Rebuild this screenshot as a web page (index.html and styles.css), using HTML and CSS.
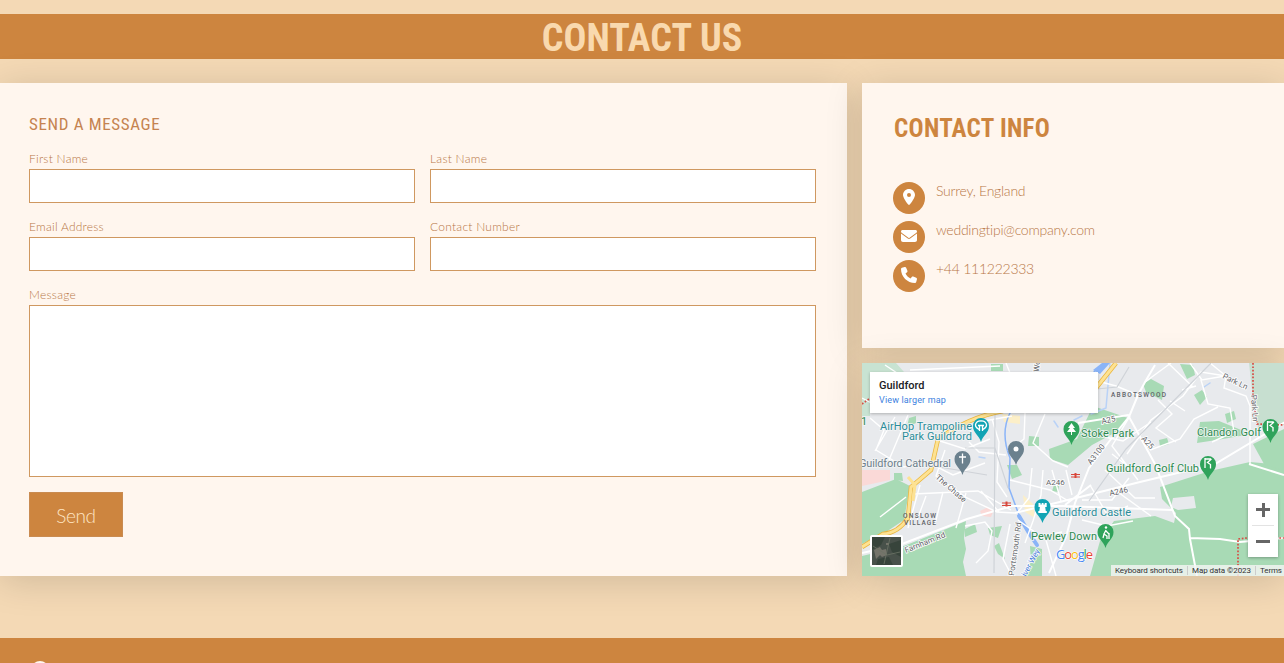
FILE: index.html
```html
<!DOCTYPE html>
<html lang="en">
<head>
<meta charset="utf-8">
<title>Contact Us</title>
<link rel="stylesheet" href="styles.css">
</head>
<body>
<header class="banner"><h1 class="banner-title">Contact Us</h1></header>
<main class="contact">
  <form class="panel form">
    <h2 class="form-title">Send a message</h2>
    <div class="fields">
      <label class="field"><span class="label">First Name</span><input class="input" type="text"></label>
      <label class="field"><span class="label">Last Name</span><input class="input" type="text"></label>
      <label class="field"><span class="label">Email Address</span><input class="input" type="text"></label>
      <label class="field"><span class="label">Contact Number</span><input class="input" type="text"></label>
      <label class="field wide"><span class="label">Message</span><textarea class="input area"></textarea></label>
    </div>
    <button class="send" type="button">Send</button>
  </form>
  <div class="side">
    <section class="panel info">
      <h2 class="info-title">Contact Info</h2>
      <ul class="list">
        <li class="item"><span class="disc"><svg width="12" height="16" viewBox="0 0 384 512"><path fill="#fff" fill-rule="evenodd" d="M215.700 499.200C267 435 384 279.400 384 192 384 86 298 0 192 0S0 86 0 192c0 87.400 117 243 168.300 307.200 12.300 15.300 35.100 15.300 47.400 0zM192 128a64 64 0 1 1 0 128 64 64 0 1 1 0-128z"/></svg></span><span>Surrey, England</span></li>
        <li class="item"><span class="disc"><svg width="16" height="16" viewBox="0 0 512 512"><path fill="#fff" d="M48 64C21.500 64 0 85.500 0 112c0 15.100 7.100 29.300 19.200 38.400l217.600 163.200c11.400 8.500 27 8.500 38.400 0l217.600-163.200c12.100-9.100 19.200-23.300 19.200-38.400 0-26.500-21.500-48-48-48H48zM0 176v208c0 35.300 28.700 64 64 64h384c35.300 0 64-28.700 64-64V176L294.400 339.200c-22.800 17.100-54 17.100-76.800 0L0 176z"/></svg></span><span>weddingtipi@company.com</span></li>
        <li class="item"><span class="disc"><svg width="16" height="16" viewBox="0 0 512 512"><path fill="#fff" d="M164.900 24.600c-7.700-18.600-28-28.500-47.400-23.200l-88 24C12.100 30.200 0 46 0 64c0 247.400 200.600 448 448 448 18 0 33.800-12.100 38.600-29.500l24-88c5.300-19.400-4.600-39.700-23.200-47.400l-96-40c-16.300-6.800-35.200-2.100-46.300 11.600L304.700 368C234.300 334.700 177.300 277.700 144 207.300l49.300-40.300c13.700-11.200 18.400-30 11.600-46.300l-40-96z"/></svg></span><span>+44 111222333</span></li>
      </ul>
    </section>
    <section class="panel map">
      <svg class="map-art" width="422" height="213" viewBox="862 363 422 213">
        <defs>
          <path id="pin" d="M0 14C-2 7-8 5-8-2a8 8 0 1 1 16 0C8 5 2 7 0 14z"/>
        </defs>
        <path fill="#e8eaed" d="M862 363h422v213H862z"/>
        <g fill="#a8dab5">
          <path fill="#c8e3d2" d="M862 363h34l8 9-34 4v40h-8z"/>
          <path fill="#c7dfd0" d="M1249 363h35v62l-26 2-5-28z"/>
          <path d="M862 492l34-13 14 7-6 34-18 12-24 12z"/>
          <path d="M862 556l42-10 62-25 -2 17 2 11-3 13 3 14H862z"/>
          <path d="M1049 449l28-10 16-33 35 12-8 12-28 15-24 20-18-6z"/>
          <path d="M1090 576l10-35 14-20 41-5 19 7 2-10-14-14-2-12 50-16 40-9 34 3v111z"/>
          <path d="M1253 444l31-15v42l-20-7z"/>
          <path d="M1200 422l19-1 32 13-28 5-26 4z"/>
          <path d="M991 364h12v7h-12zM1143 384l8-5 13 7-2 14-16-8zM1180 364l13 1 2 10-8 4zM1194 395l8-5 5 7-7 8zM1225 414l9-3 2 8-9 4zM1159 440l8-2 2 6-9 3zM1029 436l10 1v9h-11zM894 473h8l1 8-9-1zM965 529l10-5 2 8-12 5zM988 528l14-2-4 12-8-3zM994 546l5-3 6 16-7-5zM1054 485l5 1-1 6-6-1zM1030 546l12 3v27h-19l8-14z"/>
          <path d="M1007 465l10 0 5 10-10 4zM909 418l7-2v7l-9 4z"/>
        </g>
        <path fill="#e8eaed" d="M1171 507l2-9 21-2 2 12-18 2z"/>
        <g fill="#fad9d7"><path d="M862 470h28v10l-28 6zM980 511l8-4 5 5-2 5-9-1z"/></g>
        <path fill="#fcefc8" d="M1002 414l18 2v8l-16-2zM1023 495l10 9 2 14-10-6z"/>
        <g fill="none" stroke="#8ab4f8" stroke-linecap="round" stroke-linejoin="round">
          <path stroke-width="1.500" d="M1096 370l-10 10M1010 413q-10 20 0 45l-1 30 10 27"/>
          <path stroke-width="4" d="M1019 516l10 17 8 12"/>
          <path stroke-width="1.500" stroke="#b9d2f7" d="M1074 420l8-4M1054 421l4 6M979 457l6 1M1210 383l-6 4M1110 363l-4 45-15 6"/>
          <path fill="#8ab4f8" stroke="none" d="M1093 370l9-7h8l-10 11z"/>
        </g>
        <g fill="none" stroke="#fff" stroke-width="1.400">
          <path stroke-width="2" d="M1155 365l-10 17-7 13-9 22-18 22-22 29-14 35-9 34-17 36M1078 423l50-8 27 49 20 52 14 13 1 10 7 37M862 553l40-9 65-25 45-13 50 0 110 4M1190 538l30 1 20 3 44-4M1065 505l26-20M1015 513l65-16 60-15 75-18 70-42M1284 475l-35-11"/>
          <path d="M1210 363l16 13-2 12 22 8 4 10 0 58M1226 376l-25-4-18 24-32 24-24 34M1225 376l-24 4 7 24 22 4 4 24-22 10M1138 395l-22-9-22-6M1150 450l30-11 14-20 24-12M1130 416l-18 30 26 34M1145 382l26-19M1168 363l25 24M1158 400l14 14-16 14 20 14M1105 437l18 4 28-19M1112 454l18 14 12-2M1185 411l-15-10M1182 390l14-4M1090 485l18 31 20-10M1105 470l30 28 20 0M1082 500l30 0 17-22M1115 490l36 26"/>
          <path d="M870 418l14 12-8 20 28 17 21-6 28 14 32-12M895 417l-20 34M908 415l-19 45M937 440l28 9 25-10M984 421l28-5M1025 413l-1 26-16 12M1045 414l-12 29 20 18 15 6M992 419l7 23-2 40 10 15M969 442l10 10 27 3M945 450l-9 26 31 22 30 14 18 1M920 485l-12 43M926 496l-9 24M943 492l-8 32M913 494l65-3 33 19M880 517l26-20M966 493l-10 35M981 491l18 21M1032 468l-3 30-12 15M1043 470l-2 25-8 26-8 22M1010 480l40 10 20 12M1052 470l9 31M1066 470l6 25M965 526l20-4 7 9-4 20-12 12M1010 524l-7 35 9 17M1018 520l28 20 10 36M1034 538l28-6M862 398l15 8M885 365l15 10M910 370l90-4M1006 363l4 10M1190 363l12 17"/>
          <path d="M1082 520l25 6 26-5"/>
        </g>
        <g fill="none" stroke="#cfd3d8" stroke-width="1.200"><path d="M1211 363l-85 86-37 52M995 413l-1 160M965 448l30 0 13 40M1097 389l20-2 12-20M927 465l60 10"/></g>
        <path fill="none" stroke="#eab63e" stroke-width="4.500" d="M1116 363l-24 30M1003 411q-34 6-65 28l-7 31-20 17-3 31q-10 15-25 16l-21 13"/>
        <path fill="none" stroke="#fde293" stroke-width="3" d="M1116 363l-24 30M1003 411q-34 6-65 28l-7 31-20 17-3 31q-10 15-25 16l-21 13M908 477l7 8-2 16"/>
        <path fill="none" stroke="#d84d45" stroke-width="1.700" stroke-dasharray="1.700 1.700" d="M1253 363v32l4 29 27 1M1238 576v-37l9-1M862 404l7-5M1276 538l8 0"/>
        <g stroke="#d9463a" stroke-width="1"><path d="M1002 503h9M1002 505.500h9M1071 474.500h9M1071 477h9"/><path stroke-width="2" d="M1006.500 501.500v5M1075.500 473v5"/></g>
        <g class="roads">
          <text x="1102" y="424" transform="rotate(-12 1102 424)">A25</text>
          <text x="1141" y="439" transform="rotate(48 1141 439)">A25</text>
          <text x="1091" y="465" transform="rotate(-52 1091 465)">A3100</text>
          <text x="1046" y="485">A246</text>
          <text x="1110" y="496" transform="rotate(-12 1110 496)">A246</text>
          <text x="1222" y="378" transform="rotate(26 1222 378)">Park Ln</text>
          <text x="1251" y="395" transform="rotate(86 1251 395)">Park Ln</text>
          <text x="935" y="478" transform="rotate(41 935 478)">The Chase</text>
          <text x="906" y="553" transform="rotate(-22 906 553)">Farnham Rd</text>
          <text x="1014" y="576" transform="rotate(-82 1014 576)">Portsmouth Rd</text>
          <text x="1039" y="372" transform="rotate(-84 1039 372)">Wo</text>
          <text class="river" x="1026" y="577" transform="rotate(-62 1026 577)">iver Wey</text>
        </g>
        <g class="district">
          <text x="1111" y="397" textLength="55">ABBOTSWOOD</text>
          <text x="903" y="518" textLength="33">ONSLOW</text>
          <text x="904" y="524.500" textLength="32">VILLAGE</text>
        </g>
        <g class="places">
          <text fill="#2b8c99" x="880" y="429.500" textLength="92">AirHop Trampoline</text>
          <text fill="#2b8c99" x="902" y="440" textLength="70">Park Guildford</text>
          <text fill="#6d7f8a" x="859" y="466.500" textLength="92">Guildford Cathedral</text>
          <text fill="#2b8c99" x="1052" y="516" textLength="79">Guildford Castle</text>
          <text fill="#2d8a50" x="1081" y="437" textLength="53">Stoke Park</text>
          <text fill="#2d8a50" x="1197" y="435.500" textLength="64">Clandon Golf</text>
          <text fill="#2d8a50" x="1106" y="472" textLength="93">Guildford Golf Club</text>
          <text fill="#2d8a50" x="1031" y="540" textLength="66">Pewley Down</text>
          <text fill="#2d8a50" x="861" y="425">1</text>
        </g>
        <g fill="#12a4b4"><use href="#pin" x="981" y="428"/><use href="#pin" x="1042.500" y="509"/></g>
        <g fill="#2fa35b"><use href="#pin" x="1071.500" y="431"/><use href="#pin" x="1270.500" y="429"/><use href="#pin" x="1208" y="466"/><use href="#pin" x="1105.500" y="534"/></g>
        <g fill="#6b818e"><use href="#pin" x="962.500" y="461"/><use href="#pin" x="1016" y="451"/></g>
        <g fill="none" stroke="#fff" stroke-width="1.300">
          <path d="M962.500 453.500v10M959 457h7"/>
          <path d="M979 429.500c-7-4-2-9 2-8.500 4-.5 9 4.500 2 8.500M979.500 431v-5M982.500 431v-5M978 425.500h6"/>
          <path d="M1267.500 421v10M1267.500 422h6M1274 422l-4 3.500 3 2v4M1205 458v10M1205 459h6M1211.500 459l-4 3.500 3 2v4"/>
          <path d="M1106 530l-2 4 3 2v3M1104 534l-1 4M1106 531l3 3M1109 533v6"/>
        </g>
        <g fill="#fff"><circle cx="1016" cy="449" r="2.500"/><circle cx="1106" cy="527.500" r="1.200"/>
          <path d="M1071.500 423l3.500 5h-2l3 4h-4v3h-1v-3h-4l3-4h-2zM1038.500 503h2v1.500h1.200V503h1.800v1.500h1.200V503h2v4h-1.500l.6 4h1v2h-8.500v-2h1l.6-4h-1.400z"/></g>
        <text class="google" x="1056" y="559" textLength="37"><tspan fill="#4285f4">G</tspan><tspan fill="#ea4335">o</tspan><tspan fill="#fbbc04">o</tspan><tspan fill="#4285f4">g</tspan><tspan fill="#34a853">l</tspan><tspan fill="#ea4335">e</tspan></text>
        <g><rect x="870" y="535" width="33" height="32" rx="2" fill="#fff"/><path fill="#48514a" d="M872 537h29v28h-29z"/>
          <path fill="#37443b" d="M872 537h13l-4 8-9 5zM889 544l12-4v17l-9-5zM878 559l11-2 4 8h-17z"/><path fill="#74746a" d="M874 550l6-3 2 3 4-1 1 6-5 2-2-2-4 4zM886 543h3v2h-3z"/><path stroke="#6c7466" stroke-width=".8" fill="none" d="M873 546l14 9 13-3M890 538l-6 26"/></g>
        <path fill="#f5f5f5" fill-opacity=".8" d="M1111 565h173v11h-173z"/>
        <path stroke="#ccc" d="M1187.500 566v9M1255.500 566v9"/>
        <g class="legal"><text x="1115" y="573" textLength="68">Keyboard shortcuts</text><text x="1192" y="573" textLength="59">Map data ©2023</text><text x="1260" y="573" textLength="22">Terms</text></g>
      </svg>
      <div class="place-card"><strong class="place-name">Guildford</strong><span class="place-link">View larger map</span></div>
      <div class="zoom"><span class="zoom-button plus"></span><span class="zoom-rule"></span><span class="zoom-button"></span></div>
    </section>
  </div>
</main>
<footer class="footer"><span class="footer-mark"></span></footer>
</body>
</html>
```
FILE: styles.css
```css
* { box-sizing: border-box; }
body {
  margin: 0;
  height: 663px;
  padding-top: 14px;
  overflow: hidden;
  background: #f4d9b5;
  color: #b87647;
  font-family: Lato, sans-serif;
  font-weight: 300;
}
h1, h2 {
  margin: 0;
  font-family: "Roboto Condensed", Roboto, sans-serif;
  font-stretch: 75%;
  text-transform: uppercase;
}
.banner {
  height: 45px;
  background: #cd853f;
  text-align: center;
}
.banner-title {
  font-size: 38px;
  line-height: 48px;
  letter-spacing: .1px;
  color: #f9d9ae;
}
.contact {
  display: grid;
  grid-template-columns: 847px 422px;
  gap: 15px;
  height: 493px;
  margin-top: 24px;
}
.panel {
  background: #fff6ee;
  box-shadow: 0 5px 35px rgba(0, 0, 0, .15);
}
.form { padding: 31px 31px 0 29px; }
.form-title {
  font-size: 17px;
  font-weight: 400;
  line-height: 20px;
  letter-spacing: .65px;
  color: #c58350;
}
.fields {
  display: grid;
  grid-template-columns: 386px 386px;
  column-gap: 15px;
  row-gap: 15px;
  margin-top: 16px;
}
.field { display: flex; flex-direction: column; }
.wide { grid-column: 1 / 3; }
.label {
  height: 19px;
  padding-top: 1px;
  font-size: 12px;
  line-height: 16px;
  letter-spacing: .25px;
}
.input {
  display: block;
  height: 34px;
  padding: 5px;
  border: 1px solid #cf9860;
  border-radius: 0;
  background: #fff;
  outline: 0;
}
.area { height: 172px; resize: none; }
.send {
  display: block;
  width: 94px;
  height: 45px;
  margin-top: 15px;
  padding: 2px 0 0;
  border: 1px solid #c98b51;
  background: #cd853f;
  color: #ffe6c4;
  font: 300 19px Lato, sans-serif;
  letter-spacing: -.4px;
}
.side {
  display: grid;
  grid-template-rows: 265px 213px;
  gap: 15px;
}
.info { padding: 30px 31px; }
.info-title {
  padding-left: 1px;
  font-size: 25px;
  line-height: 31px;
  letter-spacing: .3px;
  color: #cd853f;
}
.list {
  display: flex;
  flex-direction: column;
  gap: 7px;
  margin: 38px 0 0;
  padding: 0;
  list-style: none;
}
.item {
  display: flex;
  gap: 11px;
  height: 32px;
  font-size: 14px;
  line-height: 18px;
  letter-spacing: -.25px;
}
.disc {
  display: flex;
  align-items: center;
  justify-content: center;
  width: 32px;
  height: 32px;
  padding-bottom: 2px;
  border-radius: 50%;
  background: #cd853f;
}
.map {
  position: relative;
  overflow: hidden;
  font-family: Roboto, sans-serif;
}
.map-art { display: block; }
.roads { font: 400 8px Roboto, sans-serif; fill: #5f6368; stroke: #fff; stroke-width: 1.5px; paint-order: stroke; }
.river { fill: #3f78d8; }
.district { font: 500 6.5px Roboto, sans-serif; fill: #5f6368; }
.places { font: 400 11px Roboto, sans-serif; stroke: #f3f5f6; stroke-width: 1.5px; paint-order: stroke; }
.google { font: 500 13px "Open Sans", sans-serif; stroke: #fff; stroke-width: 1px; paint-order: stroke; }
.legal { font: 400 8px Roboto, sans-serif; fill: #333; }
.place-card {
  position: absolute;
  left: 8px;
  top: 9px;
  display: flex;
  flex-direction: column;
  width: 228px;
  height: 41px;
  padding: 7px 9px;
  background: #fff;
  box-shadow: 0 1px 3px rgba(0, 0, 0, .25);
}
.place-name { font-size: 11px; font-weight: 500; line-height: 14px; color: #202124; }
.place-link { font-size: 9px; font-weight: 400; line-height: 15px; letter-spacing: .15px; color: #3b7fe0; }
.zoom {
  position: absolute;
  right: 6px;
  top: 131px;
  display: grid;
  grid-template-rows: 31px 1px 31px;
  width: 30px;
  background: #fff;
  box-shadow: 0 1px 3px rgba(0, 0, 0, .3);
}
.zoom-button {
  background: linear-gradient(#666, #666) center / 14px 3px no-repeat;
}
.plus {
  background: linear-gradient(#666, #666) center / 14px 3px no-repeat, linear-gradient(#666, #666) center / 3px 14px no-repeat;
}
.zoom-rule { margin: 0 4px; background: #e3e3e3; }
.footer {
  position: relative;
  height: 25px;
  margin-top: 62px;
  padding: 23px 0 0 31px;
  overflow: hidden;
  background: #cd853f;
}
.footer-mark {
  display: block;
  width: 18px;
  height: 18px;
  border-radius: 50%;
  background: #fff6ee;
}
```
